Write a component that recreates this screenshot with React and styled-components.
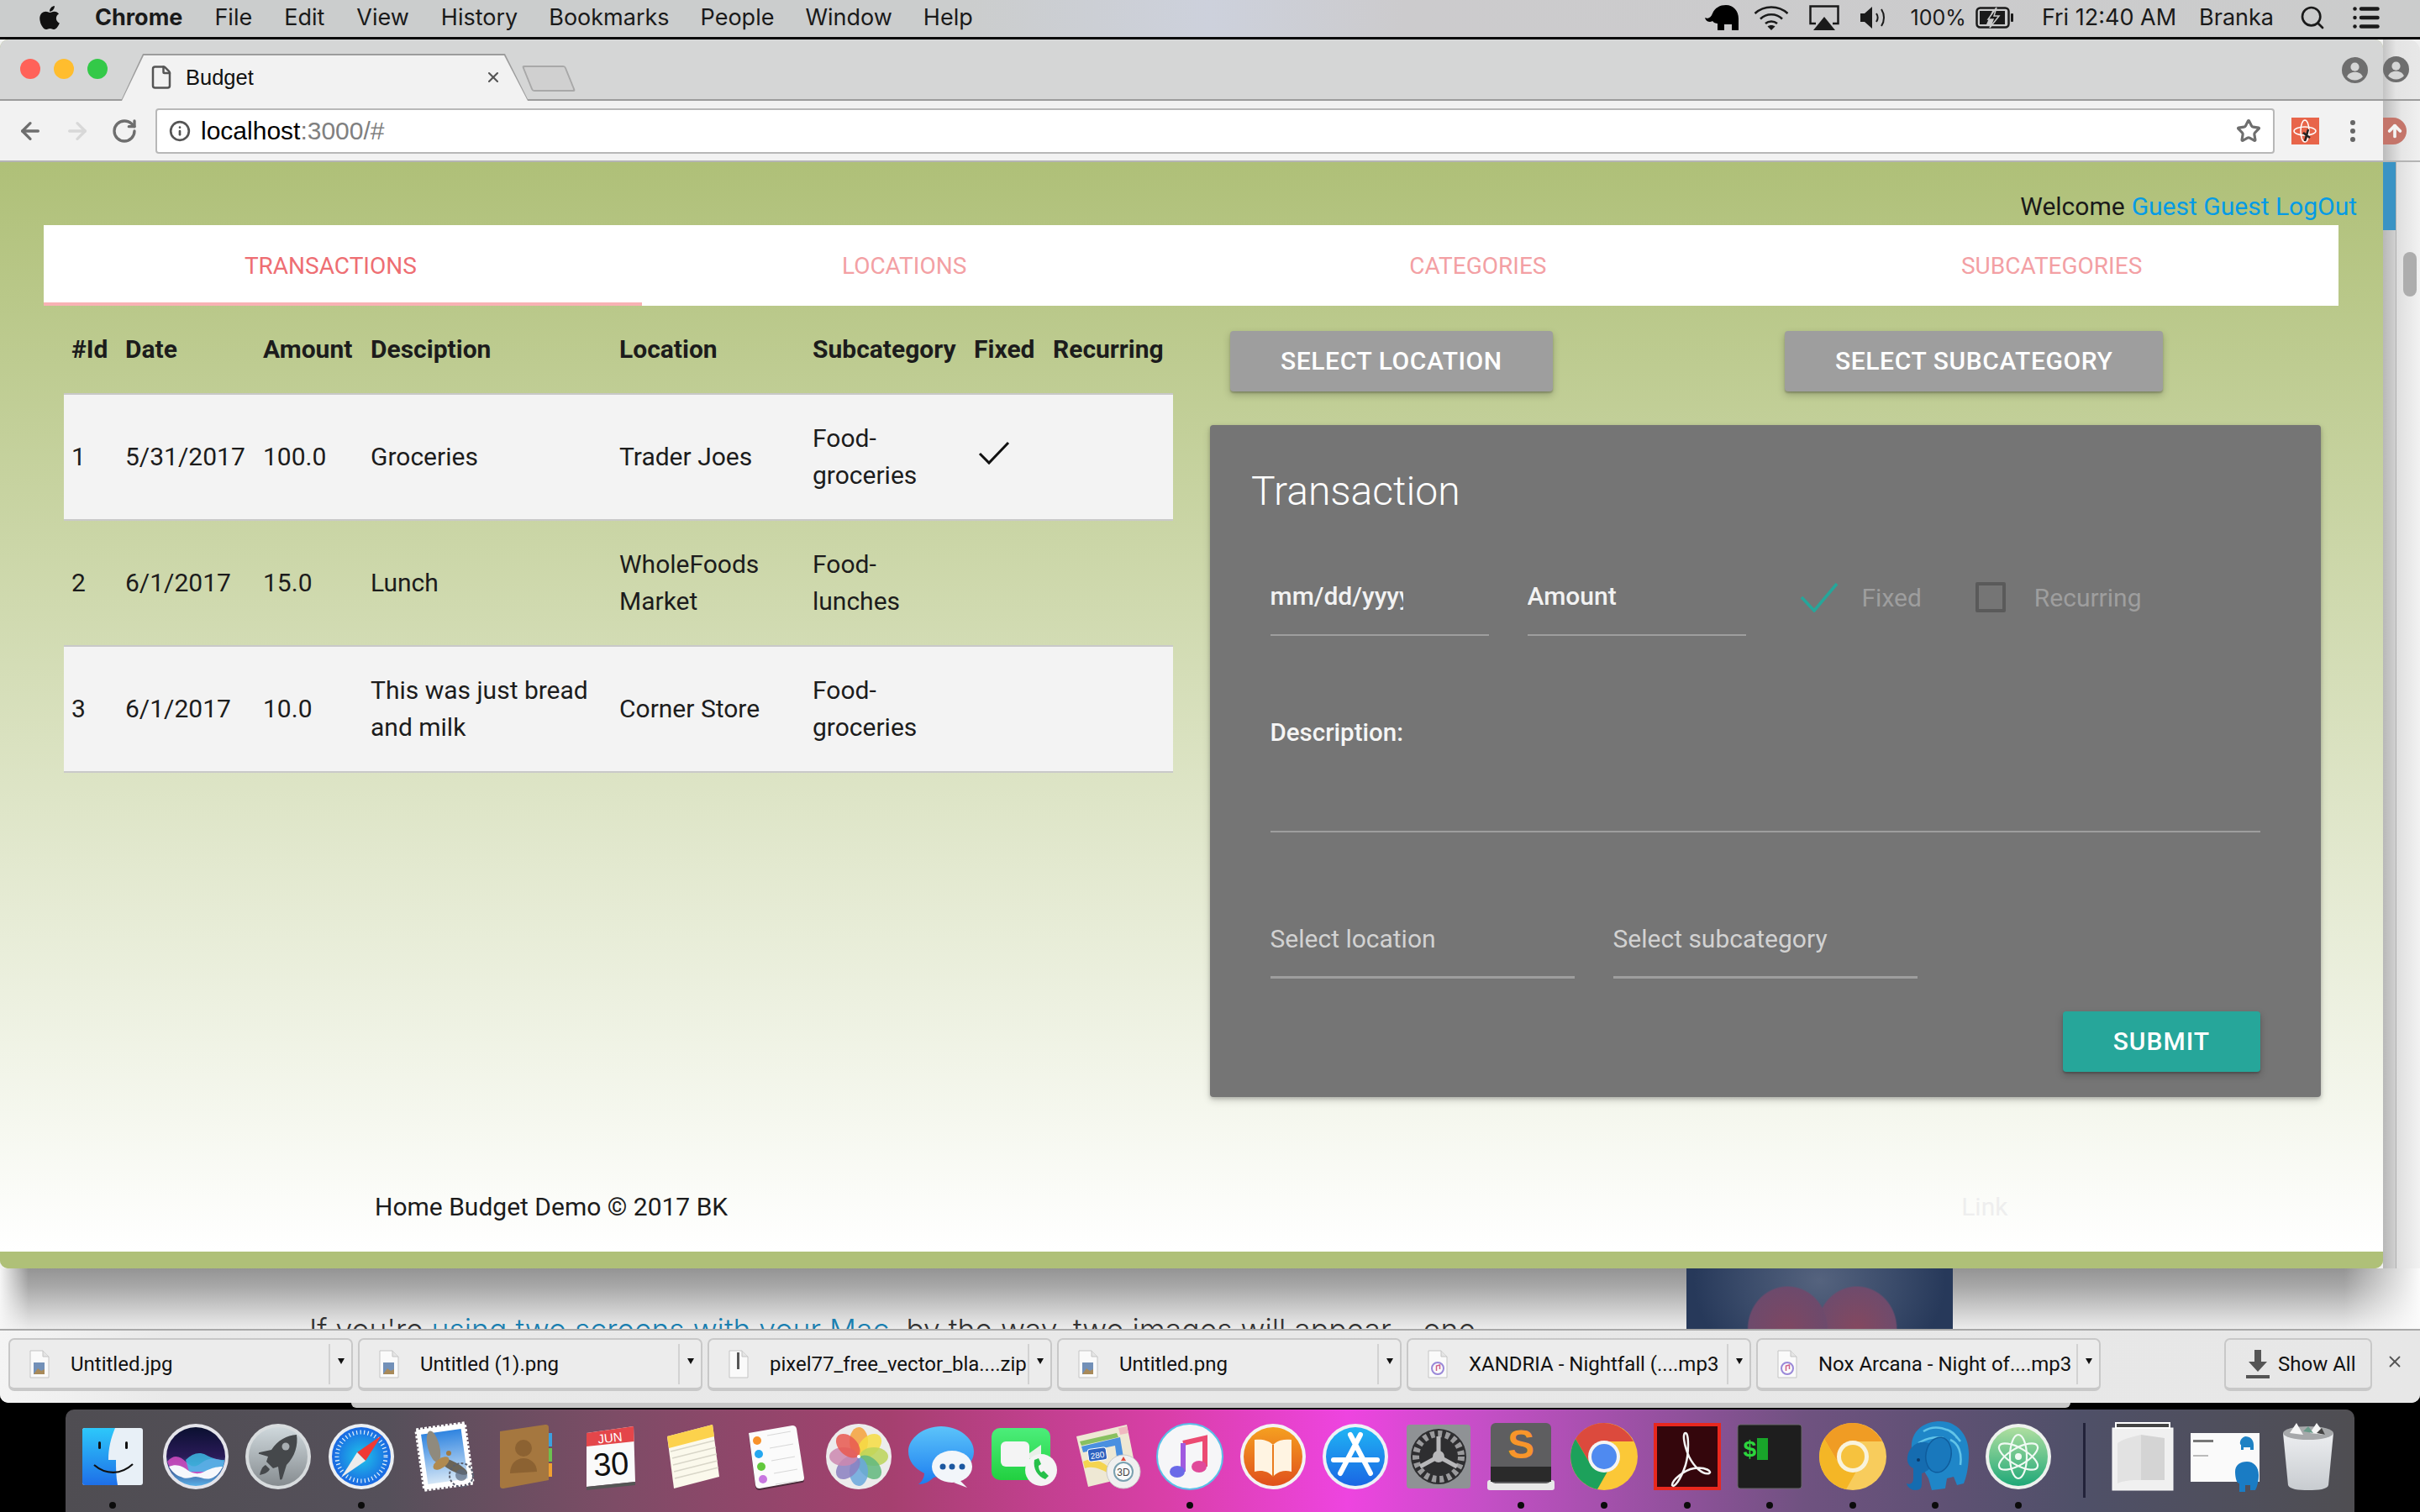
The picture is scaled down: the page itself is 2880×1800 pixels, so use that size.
import React from 'react';
import styled, { createGlobalStyle } from 'styled-components';
import { FaApple } from 'react-icons/fa';
import { Search, List, Star, Info, ArrowLeft, ArrowRight, RotateCw, File, X, ArrowUp } from 'lucide-react';

const Global = createGlobalStyle`
  html, body { margin: 0; padding: 0; background: #000; }
  * { box-sizing: border-box; }
`;

const Screen = styled.div`
  width: 2880px;
  height: 1800px;
  overflow: hidden;
  display: flex;
  flex-direction: column;
  font-family: Roboto, sans-serif;
  background: #000;
`;

/* mac menu bar */
const MenuBar = styled.div`
  height: 47px;
  flex: none;
  display: flex;
  align-items: center;
  padding: 0 46px 3px 43px;
  border-bottom: 3px solid #0a0a0a;
  background: linear-gradient(90deg, #cbcdcd 0%, #cbcdcd 40%, #cdd1dc 50%, #cccbcd 58%, #cbcccc 100%);
  font-family: Inter, sans-serif;
  font-size: 27px;
  color: #1a1a1a;
`;

const MenuLink = styled.span`
  margin-left: ${p => p.$ml}px;
  font-size: ${p => p.$size || 27}px;
  font-weight: ${p => (p.$bold ? 700 : 400)};
  white-space: nowrap;
`;

const MenuIcon = styled.span`
  display: flex;
  align-items: center;
  margin-left: ${p => p.$ml}px;
`;

const Spacer = styled.div`
  flex: 1;
`;

/* the window behind, it holds the download bar */
const BackWindow = styled.div`
  height: 1623px;
  flex: none;
  display: flex;
  flex-direction: column;
  background: #f0f0f0;
  border-radius: 0 0 10px 10px;
  overflow: hidden;
`;

const TopRow = styled.div`
  height: 1463px;
  flex: none;
  display: flex;
`;

const FrontWindow = styled.div`
  width: 2836px;
  flex: none;
  display: flex;
  flex-direction: column;
  background: #afc078;
  border-radius: 10px;
  overflow: hidden;
`;

const TabStrip = styled.div`
  height: 73px;
  flex: none;
  display: flex;
  align-items: flex-end;
  background: #d5d6d6;
  border-bottom: 2px solid #9c9c9c;
`;

const Lights = styled.div`
  width: 144px;
  height: 100%;
  flex: none;
  display: flex;
  align-items: center;
  gap: 16px;
  padding: 0 0 1px 24px;
`;

const Light = styled.span`
  width: 24px;
  height: 24px;
  border-radius: 50%;
  background: ${p => p.$color};
`;

const Tab = styled.div`
  position: relative;
  width: 485px;
  height: 56px;
  margin-bottom: -2px;
  flex: none;
  display: flex;
  align-items: center;
  padding-left: 33px;
  font-size: 25.5px;
  font-family: "Liberation Sans", sans-serif;
  color: #111;
  background: #9c9c9c;
  clip-path: polygon(26px 0, calc(100% - 28px) 0, 100% 100%, 0 100%);
  &::before {
    content: '';
    position: absolute;
    inset: 2px 0 0 0;
    background: #f2f2f2;
    clip-path: polygon(27px 0, calc(100% - 29px) 0, calc(100% - 1px) 100%, 1px 100%);
  }
  & > * { position: relative; }
`;

const TabTitle = styled.span`
  margin-left: 14px;
  flex: 1;
`;

const TabClose = styled.span`
  display: flex;
  margin-right: 32px;
`;

const NewTab = styled.div`
  width: 52px;
  height: 31px;
  margin: 0 0 9px -2px;
  flex: none;
  transform: skewX(22deg);
  background: #d0d0d0;
  border: 2px solid #a8a8a8;
  border-radius: 3px;
`;

const ProfileSpot = styled.div`
  margin: 0 18px 19px auto;
  display: flex;
`;

const Toolbar = styled.div`
  height: 73px;
  flex: none;
  display: flex;
  align-items: center;
  background: #f2f2f2;
  border-bottom: 2px solid #b4b4b4;
  padding-left: 20px;
`;

const NavIcon = styled.span`
  display: flex;
  margin-right: ${p => p.$mr}px;
  color: ${p => p.$color || '#6e6e6e'};
`;

const Omnibox = styled.div`
  width: 2522px;
  height: 54px;
  flex: none;
  display: flex;
  align-items: center;
  padding: 0 14px;
  background: #fff;
  border: 2px solid #b8b8b8;
  border-radius: 4px;
  font-family: "Liberation Sans", sans-serif;
  font-size: 30px;
  color: #000;
`;

const Url = styled.span`
  margin-left: 12px;
  flex: 1;
`;

const UrlRest = styled.span`
  color: #808080;
`;

const Extension = styled.div`
  width: 33px;
  height: 32px;
  margin-left: 20px;
  flex: none;
  display: flex;
  background: #e8654a;
`;

const Kebab = styled.div`
  margin-left: 37px;
  display: flex;
  flex-direction: column;
  gap: 4px;
  & > span {
    width: 6px;
    height: 6px;
    border-radius: 50%;
    background: #666;
  }
`;

/* the page in the browser */
const Content = styled.div`
  height: 1297px;
  flex: none;
  display: flex;
  flex-direction: column;
  background: linear-gradient(180deg, #afc078 0%, #ffffff 100%);
`;

const WelcomeRow = styled.div`
  height: 75px;
  flex: none;
  display: flex;
  justify-content: flex-end;
  align-items: flex-end;
  padding-right: 31px;
  font-size: 30px;
  line-height: 44px;
  color: #1a1a1a;
`;

const BlueLink = styled.a`
  color: #039be5;
  margin-left: 8px;
`;

const Tabs = styled.div`
  height: 96px;
  margin: 0 53px 0 52px;
  flex: none;
  display: grid;
  grid-template-columns: repeat(4, 1fr);
  background: #fff;
`;

const TabLink = styled.div`
  position: relative;
  display: flex;
  align-items: center;
  justify-content: center;
  padding-top: 1px;
  font-size: 28px;
  color: ${p => (p.$active ? '#ee6e73' : '#f3a0a4')};
`;

/* the indicator runs a bit wider than its tab, as in the original */
const TabIndicator = styled.span`
  position: absolute;
  left: 0;
  bottom: 0;
  width: 712px;
  height: 4px;
  background: #f8b2b4;
`;

const Main = styled.div`
  display: flex;
  padding-left: 76px;
  gap: 44px;
`;

const Table = styled.table`
  width: 1320px;
  height: 556px;
  flex: none;
  table-layout: fixed;
  border-collapse: collapse;
  font-size: 30px;
  line-height: 44px;
  color: #1c1c1c;
`;

const Th = styled.th`
  padding: 30px 0 30px 9px;
  text-align: left;
  font-weight: 700;
  white-space: nowrap;
  border-bottom: 2px solid #c8c8c8;
`;

const Row = styled.tr`
  background: ${p => (p.$odd ? '#f3f3f3' : 'transparent')};
`;

const Td = styled.td`
  padding: 30px 9px;
  vertical-align: middle;
  border-bottom: 2px solid #c9c9c9;
`;

const FixedMark = styled.svg`
  display: block;
  margin: -8px 0 0 5px;
`;

const RightCol = styled.div`
  width: 1322px;
  flex: none;
  padding-top: 30px;
`;

const ButtonRow = styled.div`
  display: grid;
  grid-template-columns: 660px 660px;
  padding-left: 24px;
`;

const RaisedButton = styled.button`
  height: 72px;
  padding: 0 60px 2px;
  justify-self: start;
  border: none;
  border-radius: 4px;
  background: ${p => p.$color};
  color: #fff;
  font-family: Roboto, sans-serif;
  font-size: 30px;
  font-weight: 500;
  letter-spacing: ${p => p.$spacing || 0.6}px;
  box-shadow: 0 4px 10px rgba(0, 0, 0, .22), 0 2px 2px rgba(0, 0, 0, .2);
`;

const Card = styled.div`
  margin-top: 40px;
  height: 800px;
  padding: 47px 72px 30px 49px;
  background: #757575;
  border-radius: 4px;
  box-shadow: 0 4px 10px rgba(0, 0, 0, .16), 0 2px 4px rgba(0, 0, 0, .18);
`;

const CardTitle = styled.div`
  font-size: 48px;
  font-weight: 300;
  line-height: 64px;
  color: #fff;
`;

const Form = styled.div`
  padding-left: 22.5px;
  display: flex;
  flex-direction: column;
`;

const InputRow = styled.div`
  display: flex;
  align-items: flex-start;
  margin-top: 50px;
`;

const Field = styled.div`
  width: ${p => p.$w}px;
  height: 90px;
  margin-right: ${p => p.$mr || 0}px;
  flex: none;
  display: flex;
  align-items: center;
  padding-bottom: 4px;
  border-bottom: 2px solid #9e9e9e;
`;

const TextInput = styled.input`
  width: ${p => p.$w || 240}px;
  padding: 0;
  border: none;
  outline: none;
  background: transparent;
  font-family: Roboto, sans-serif;
  font-size: 30px;
  font-weight: 500;
  color: #f2f2f2;
  &::placeholder { color: #f2f2f2; opacity: 1; }
`;

const CheckItem = styled.div`
  height: 90px;
  display: flex;
  align-items: center;
  padding-bottom: 2px;
  margin-right: ${p => p.$mr || 0}px;
  font-size: 30px;
  color: #9e9e9e;
`;

const CheckLabel = styled.span`
  margin-left: ${p => p.$ml}px;
`;

const BoxMark = styled.span`
  width: 36px;
  height: 36px;
  border: 4px solid #5a5a5a;
  border-radius: 2px;
`;

const DescField = styled.div`
  height: 141px;
  margin-top: 93px;
  font-size: 29.5px;
  font-weight: 500;
  line-height: 44px;
  color: #f5f5f5;
  border-bottom: 2px solid #9e9e9e;
`;

const SelectRow = styled.div`
  display: flex;
  gap: 46px;
  margin-top: 82px;
`;

const SelectField = styled.div`
  width: 362px;
  height: 92px;
  display: flex;
  align-items: center;
  font-size: 30px;
  color: #d2d2d2;
  border-bottom: 3px solid #9e9e9e;
`;

const SubmitRow = styled.div`
  display: flex;
  justify-content: flex-end;
  margin-top: 39px;
`;

const Footer = styled.div`
  margin-top: auto;
  height: 75px;
  flex: none;
  display: flex;
  padding-left: 446px;
  font-size: 30px;
  line-height: 44px;
  color: #1c1c1c;
`;

const FooterLink = styled.span`
  margin-left: 1468px;
  color: #eeeeee;
`;

const GreenEdge = styled.div`
  flex: 1;
  background: #afc078;
`;

/* what can be seen of the window behind on the right */
const SideStrip = styled.div`
  flex: 1;
  display: flex;
  flex-direction: column;
`;

const SideTabs = styled.div`
  height: 73px;
  flex: none;
  display: flex;
  align-items: center;
  padding-bottom: 1px;
  background: linear-gradient(90deg, #c4c4c4, #e4e4e4 35%, #e8e8e8);
  border-bottom: 2px solid #9c9c9c;
  border-radius: 0 14px 0 0;
`;

const SideTools = styled.div`
  height: 73px;
  flex: none;
  display: flex;
  align-items: center;
  background: linear-gradient(90deg, #bcbcbc, #e6e6e6 50%, #f0f0f0);
  border-bottom: 2px solid #b4b4b4;
`;

const UploadBadge = styled.div`
  width: 28px;
  height: 32px;
  display: flex;
  align-items: center;
  justify-content: center;
  border-radius: 0 16px 16px 0;
  background: #c4756a;
  color: #f4f4f4;
`;

const SideBody = styled.div`
  flex: 1;
  display: flex;
`;

const SideRail = styled.div`
  width: 16px;
  flex: none;
  background: linear-gradient(90deg, #b8b8b8, #d0d0d0);
  border-right: 1px solid #b0b0b0;
`;

const SideBlue = styled.div`
  height: 81px;
  background: #3a93c4;
`;

const SideTrack = styled.div`
  flex: 1;
  padding: 107px 4px 0 8px;
  background: linear-gradient(90deg, #dedede, #f2f2f2);
`;

const SideThumb = styled.div`
  height: 53px;
  border-radius: 8px;
  background: #adadad;
`;

const ArticlePeek = styled.div`
  height: 72px;
  flex: none;
  display: flex;
  overflow: hidden;
  background:
    linear-gradient(90deg, #f6f6f6 0, rgba(246, 246, 246, 0) 34px),
    linear-gradient(270deg, #fbfbfb 0, rgba(251, 251, 251, 0) 90px),
    linear-gradient(180deg, #949494 0, #a8a8a8 30%, #cfcfcf 70%, #ececec 100%);
`;

const ArticleText = styled.div`
  width: 2007px;
  flex: none;
  padding: 52px 0 0 368px;
  font-family: Inter, sans-serif;
  font-size: 35.5px;
  font-weight: 300;
  line-height: 44px;
  color: #333;
  white-space: nowrap;
`;

const ArticleLink = styled.span`
  color: #1a7fb0;
`;

const ArticleImage = styled.div`
  width: 317px;
  flex: none;
  background:
    radial-gradient(ellipse 62px 66px at 38% 100%, #7e4762 0, #6d4a6c 75%, transparent 78%),
    radial-gradient(ellipse 62px 66px at 64% 100%, #84485f 0, #6f4b6c 75%, transparent 78%),
    radial-gradient(ellipse 150px 120px at 50% 20%, #55637e 0, #3a4b6a 60%, transparent 100%),
    #27395a;
`;

const DownloadBar = styled.div`
  flex: 1;
  display: flex;
  align-items: flex-start;
  gap: 6px;
  padding: 9px 0 0 10px;
  border-top: 2px solid #a8a8a8;
  background: linear-gradient(90deg, #f4f4f4 0, #e9e9e9 200px, #e7e7e7 100%);
`;

const DownloadItem = styled.div`
  width: 410px;
  height: 63px;
  flex: none;
  display: flex;
  align-items: center;
  padding-left: 22px;
  border: 2px solid #c8c8c8;
  border-bottom-width: 4px;
  border-radius: 7px;
  background: #ececec;
  font-family: Roboto, sans-serif;
  font-size: 24px;
  color: #111;
`;

const DownloadName = styled.span`
  margin-left: 24px;
  flex: 1;
  white-space: nowrap;
`;

const DownloadCaret = styled.span`
  width: 27px;
  height: 48px;
  flex: none;
  display: flex;
  align-items: center;
  justify-content: center;
  padding-bottom: 6px;
  border-left: 2px solid #d2d2d2;
  &::before {
    content: '';
    border-left: 4px solid transparent;
    border-right: 4px solid transparent;
    border-top: 7px solid #111;
  }
`;

const ShowAll = styled.div`
  width: 176px;
  height: 63px;
  margin-left: 141px;
  flex: none;
  display: flex;
  align-items: center;
  gap: 10px;
  padding-left: 24px;
  border: 2px solid #c8c8c8;
  border-bottom-width: 4px;
  border-radius: 7px;
  font-family: Roboto, sans-serif;
  font-size: 24px;
  white-space: nowrap;
  color: #111;
`;

const BarClose = styled.span`
  margin: 17px 0 0 10px;
  display: flex;
  color: #555;
`;

/* desktop and dock */
const Desktop = styled.div`
  flex: 1;
  min-height: 0;
  background: #000;
`;

const BehindEdge = styled.div`
  width: 2046px;
  height: 6px;
  margin-left: 418px;
  background: #c8c8c8;
  border-radius: 0 0 8px 8px;
`;

const Dock = styled.div`
  width: 2724px;
  height: 122px;
  margin: 2px 0 0 78px;
  display: flex;
  padding: 14px 0 0 7px;
  border-radius: 10px 10px 0 0;
  background: linear-gradient(90deg, #4f4d52 0%, #55505a 14%, #7d4c66 24%, #a5406f 36%, #d93fa8 48%, #ee44e0 56%, #c44fc6 62%, #6f5280 76%, #4f5068 88%, #4f4e52 100%);
`;

const DockSlot = styled.div`
  width: 98.6px;
  flex: none;
  display: flex;
  flex-direction: column;
  align-items: center;
`;

const DockGlyph = styled.svg`
  width: 84px;
  height: 84px;
  flex: none;
`;

const DockDot = styled.span`
  width: 8px;
  height: 8px;
  margin-top: 12px;
  flex: none;
  border-radius: 50%;
  background: ${p => (p.$on ? '#0b0b0b' : 'transparent')};
`;

const DockDivider = styled.span`
  width: 3px;
  height: 89px;
  margin: 2px 18px 0 28px;
  flex: none;
  background: #23233a;
`;

const Profile = ({ size = 31 }) => (
  <svg width={size} height={size} viewBox="0 0 28 28">
    <circle cx="14" cy="14" r="14" fill="#6e6e6e" />
    <circle cx="14" cy="10.500" r="4.600" fill="#d5d6d6" />
    <path d="M5.500 21c1.500-3.600 5-5 8.500-5s7 1.400 8.500 5c-2 2.400-5 3.800-8.500 3.800S7.500 23.400 5.500 21z" fill="#d5d6d6" />
  </svg>
);

const DocIcon = ({ kind }) => (
  <svg width="26" height="34" viewBox="0 0 26 34" style={{ flex: 'none' }}>
    <path d="M2 1h15l7 7v25H2z" fill="#fafafa" stroke="#c4c4c4" />
    <path d="M17 1v7h7" fill="#e4e4e4" stroke="#c4c4c4" />
    {kind === 'img' && <rect x="6" y="15" width="13" height="14" fill="#7290b8" />}
    {kind === 'img' && <path d="M6 29l5-7 4 3 4-2v6z" fill="#a88a5a" />}
    {kind === 'zip' && <rect x="11" y="3" width="3" height="20" fill="#555" />}
    {kind === 'mp3' && <circle cx="13" cy="22" r="7" fill="none" stroke="#9a88d8" strokeWidth="2" />}
    {kind === 'mp3' && <path d="M11.500 25v-6l4-1v5" fill="none" stroke="#d0608a" strokeWidth="1.500" />}
  </svg>
);

const Elephant = () => (
  <svg width="42" height="32" viewBox="0 0 42 32">
    <path d="M1 16c4 2 7 0 9-5C13 4 19 1 26 1c9 0 15 7 15 16v14h-8v-7h-9v7h-8v-8c-2 0-5-1-6-3-3 2-8 1-9-4z" fill="#000" />
  </svg>
);

const Wifi = () => (
  <svg width="42" height="30" viewBox="0 0 42 30" fill="none" stroke="#1a1a1a" strokeWidth="2.500">
    <path d="M1.500 10c11-10 28-10 39 0" />
    <path d="M8 16.500c7-7 19-7 26 0" />
    <path d="M14 22c4-3.500 10-3.500 14 0" />
    <path d="M21 30l-4.500-4.500c2.500-2 6.500-2 9 0z" fill="#1a1a1a" stroke="none" />
  </svg>
);

const AirPlayMark = () => (
  <svg width="36" height="30" viewBox="0 0 36 30">
    <path d="M8 22H1.500V1.500h33V22H28" fill="none" stroke="#1a1a1a" strokeWidth="2.500" />
    <path d="M18 14l13 16H5z" fill="#1a1a1a" />
  </svg>
);

const Speaker = () => (
  <svg width="34" height="28" viewBox="0 0 34 28" fill="none" stroke="#1a1a1a" strokeWidth="2">
    <path d="M1 9h5l9-8v26l-9-8H1z" fill="#1a1a1a" stroke="none" />
    <path d="M20 9c2 3 2 7 0 10" />
    <path d="M26 4c4 6 4 14 0 20" />
  </svg>
);

const Battery = () => (
  <svg width="46" height="26" viewBox="0 0 46 26">
    <rect x="1.500" y="1.500" width="38" height="23" rx="4" fill="none" stroke="#1a1a1a" strokeWidth="2.500" />
    <rect x="42" y="8" width="3" height="10" rx="1" fill="#1a1a1a" />
    <path d="M5 5h15L13 21H5zM22 5h13v16H20z" fill="#1a1a1a" />
    <path d="M25 1l-10 14h6l-4 10 11-14h-6z" fill="#1a1a1a" stroke="#cbcccc" strokeWidth="1.500" />
  </svg>
);

const Glyph = ({ children }) => <DockGlyph viewBox="0 0 84 84">{children}</DockGlyph>;

const Fade = ({ id, from, to, mid }) => (
  <defs>
    <linearGradient id={id} x1="0" y1="0" x2="0" y2="1">
      <stop offset="0" stopColor={from} />
      {mid && <stop offset=".5" stopColor={mid} />}
      <stop offset="1" stopColor={to} />
    </linearGradient>
  </defs>
);

const dockIcons = [
  { key: 'finder', on: true, art: (
    <>
      <Fade id="finderBlue" from="#2dc8fa" to="#1e6fe8" />
      <rect x="6" y="8" width="72" height="68" rx="3" fill="#e8f0f7" />
      <path d="M9 8h36c-5 12-8 24-8 38h9c0 10 0 20 2 30H9c-2 0-3-1-3-3V11c0-2 1-3 3-3z" fill="url(#finderBlue)" />
      <rect x="25" y="24" width="3" height="9" rx="1.500" fill="#111" />
      <rect x="57" y="24" width="3" height="9" rx="1.500" fill="#111" />
      <path d="M20 52c14 12 32 12 46-1" fill="none" stroke="#111" strokeWidth="2.200" />
    </>
  ) },
  { key: 'siri', art: (
    <>
      <Fade id="siriBack" from="#0a1030" mid="#2a1a58" to="#5ab0e8" />
      <circle cx="42" cy="42" r="39" fill="#e4e4ea" />
      <circle cx="42" cy="42" r="35" fill="url(#siriBack)" />
      <path d="M8 48c8-10 16-6 22 0s10 8 18 2 14-8 28-2c-2 8-6 12-10 14H18c-4-3-8-8-10-14z" fill="#e04fc8" opacity=".8" />
      <path d="M30 46c8-8 16-10 24-6s14 6 22 6c0 6-2 10-6 14H34z" fill="#3fc4ee" opacity=".8" />
      <path d="M10 54c10-4 16 0 22 4s12 6 20 2 14-6 22-6c-4 8-8 12-14 14-8 2-12-2-18-2s-10 4-18 0c-6-2-10-6-14-12z" fill="#f6f8fc" />
    </>
  ) },
  { key: 'launchpad', art: (
    <>
      <Fade id="padBack" from="#cfd8dc" to="#868c90" />
      <circle cx="42" cy="42" r="39" fill="#d8dcde" />
      <circle cx="42" cy="42" r="35" fill="url(#padBack)" />
      <path d="M64 16c-12 1-22 6-30 18l-14 3c-1 0-2 2 0 2l10 3-2 6 8 8 6-2 2 14c0 2 2 2 3 0l5-16C62 42 66 28 64 16z" fill="#45484b" />
      <circle cx="51" cy="30" r="4.500" fill="#a8aeb2" />
      <path d="M27 52c-4 2-6 7-7 12 5-1 10-3 12-7z" fill="#45484b" />
    </>
  ) },
  { key: 'safari', on: true, art: (
    <>
      <defs>
        <radialGradient id="safariBack">
          <stop offset="0" stopColor="#1fc4ea" />
          <stop offset="1" stopColor="#1a68e2" />
        </radialGradient>
      </defs>
      <circle cx="42" cy="42" r="39" fill="#eceff2" />
      <circle cx="42" cy="42" r="35" fill="url(#safariBack)" />
      <circle cx="42" cy="42" r="29" fill="none" stroke="#e4f0fb" strokeWidth="5" strokeDasharray="1.200 3.300" />
      <path d="M66 17L47 47 37 37z" fill="#f03a35" />
      <path d="M18 67l19-30 10 10z" fill="#ececec" />
    </>
  ) },
  { key: 'mail', art: (
    <>
      <Fade id="mailSky" from="#2f84e0" to="#d4e6f6" />
      <rect x="13" y="6" width="58" height="72" fill="#fff" stroke="#fff" strokeWidth="4" strokeDasharray="3 2" transform="rotate(-8 42 42)" />
      <rect x="18" y="12" width="48" height="60" fill="url(#mailSky)" transform="rotate(-8 42 42)" />
      <ellipse cx="29" cy="30" rx="7" ry="19" fill="#8f8a7e" transform="rotate(-14 29 30)" />
      <ellipse cx="53" cy="54" rx="18" ry="5.500" fill="#6a6458" transform="rotate(28 53 54)" />
      <ellipse cx="38" cy="50" rx="11" ry="5.500" fill="#b08a50" transform="rotate(-35 38 50)" />
      <circle cx="47" cy="38" r="3" fill="#a07a44" />
      <circle cx="62" cy="64" r="14" fill="none" stroke="#5a6070" strokeWidth="2" strokeDasharray="3 2" />
      <circle cx="62" cy="64" r="7" fill="#5a6a80" opacity=".7" />
    </>
  ) },
  { key: 'contacts', art: (
    <>
      <rect x="66" y="14" width="6" height="16" fill="#3ba0e0" />
      <rect x="66" y="32" width="6" height="16" fill="#6cc050" />
      <rect x="66" y="50" width="6" height="16" fill="#f0a030" />
      <path d="M10 12l54-8c3 0 4 1 4 4v62L14 80c-3 0-4-1-4-4z" fill="#a5773f" />
      <circle cx="38" cy="32" r="10" fill="#8c6232" />
      <path d="M22 62c0-12 8-18 16-18s16 6 16 16z" fill="#8c6232" />
    </>
  ) },
  { key: 'calendar', art: (
    <>
      <path d="M14 14l56-8 2 66-58 6z" fill="#fafafa" />
      <path d="M14 14l56-8 .6 18-56.600 6z" fill="#e4464a" />
      <text x="42" y="25" fontFamily="Liberation Sans, sans-serif" fontSize="15" fill="#fff" textAnchor="middle" transform="rotate(-6 42 20)">JUN</text>
      <text x="43" y="64" fontFamily="Liberation Sans, sans-serif" fontSize="38" fill="#111" textAnchor="middle" transform="rotate(-4 42 50)">30</text>
      <path d="M14 78l58-6v4l-58 6z" fill="#555" />
    </>
  ) },
  { key: 'notes', art: (
    <>
      <path d="M12 18l54-14 8 62-54 14z" fill="#fbf9ec" />
      <path d="M12 18l54-14 2 14-54 14z" fill="#fcd24c" />
      <path d="M16 36l52-13M18 44l52-13M19 52l52-13M20 60l52-13M21 68l52-13" stroke="#d8d6c8" strokeWidth="1.500" />
    </>
  ) },
  { key: 'reminders', art: (
    <>
      <path d="M10 16l52-9c3 0 4 1 5 4l9 58c0 3-1 4-3 4l-50 9c-3 0-4-1-5-4z" fill="#1a1a1a" opacity=".6" />
      <path d="M10 14l52-9c3 0 4 1 5 4l9 58c0 3-1 4-3 4l-50 9c-3 0-4-1-5-4z" fill="#fbfbfb" />
      <circle cx="20" cy="23" r="5" fill="#f8922a" />
      <circle cx="22" cy="39" r="5" fill="#25a8f0" />
      <circle cx="25" cy="54" r="5" fill="#62c83c" />
      <circle cx="27" cy="69" r="5" fill="#c878e0" />
      <path d="M32 17l28-5M35 32l28-5M37 47l28-5M40 62l28-5M42 75l26-4" stroke="#d8d8d8" strokeWidth="1.200" />
    </>
  ) },
  { key: 'photos', art: (
    <>
      <circle cx="42" cy="42" r="39" fill="#ececec" />
      {['#f5a23c', '#f6dc44', '#bcd45a', '#62b87e', '#6aa8dc', '#8a80c0', '#cc88b0', '#e85a50'].map((c, i) => (
        <ellipse key={c} cx="42" cy="24" rx="11" ry="17" fill={c} opacity=".86" transform={`rotate(${i * 45} 42 42)`} />
      ))}
      <circle cx="42" cy="42" r="2" fill="#fff" />
    </>
  ) },
  { key: 'messages', art: (
    <>
      <Fade id="msgBlue" from="#5cc4fa" to="#1c7df0" />
      <path d="M42 6c21 0 39 14 39 30S63 66 42 66c-3 0-6 0-9 1-5 5-11 8-18 8 4-3 7-8 7-13C10 56 3 47 3 36 3 20 21 6 42 6z" fill="url(#msgBlue)" />
      <ellipse cx="55" cy="54" rx="24" ry="19" fill="#f2f6fa" />
      <path d="M64 70l9 9-16-6z" fill="#f2f6fa" />
      <circle cx="44" cy="54" r="3.500" fill="#1c58a0" />
      <circle cx="55" cy="54" r="3.500" fill="#1c58a0" />
      <circle cx="67" cy="54" r="3.500" fill="#1c58a0" />
    </>
  ) },
  { key: 'facetime', art: (
    <>
      <Fade id="ftGreen" from="#4cee7a" to="#22d040" />
      <rect x="3" y="8" width="70" height="62" rx="10" fill="url(#ftGreen)" />
      <rect x="14" y="24" width="34" height="30" rx="6" fill="#f4f4f4" />
      <path d="M48 38l14-10v26l-14-10z" fill="#e8f0e8" />
      <circle cx="62" cy="58" r="19" fill="#f4f4f4" />
      <path d="M54 46c-2 10 4 20 13 23l4-4-6-6-3 2c-2-2-3-5-3-8l3-2-3-7z" fill="#26c04a" />
    </>
  ) },
  { key: 'maps', art: (
    <>
      <path d="M6 18L66 4l12 60-58 14z" fill="#eee8d4" />
      <path d="M10 24l44-10 2 5-44 10z" fill="#88c060" />
      <path d="M12 30l46-11 6 36-8 2-4-28-38 8z" fill="#4a90e0" />
      <path d="M56 8l10-2 2 8-10 2z" fill="#f0b8c0" />
      <path d="M14 48c12-6 22 0 30 6l4 10c-10-6-22-12-32-8z" fill="#f4d450" />
      <rect x="20" y="32" width="22" height="15" rx="3" fill="#2e62c0" stroke="#fff" transform="rotate(-8 31 40)" />
      <text x="31" y="44" fontFamily="Liberation Sans, sans-serif" fontSize="10" fill="#fff" textAnchor="middle" transform="rotate(-8 31 40)">280</text>
      <circle cx="62" cy="60" r="20" fill="#f0f0f0" stroke="#c8c8c8" />
      <circle cx="62" cy="60" r="11" fill="#fafafa" stroke="#7aa0b0" strokeWidth="2" />
      <path d="M62 42l3 5h-6z" fill="#e04a3a" />
      <text x="62" y="65" fontFamily="Liberation Sans, sans-serif" fontSize="12" fill="#444" textAnchor="middle">3D</text>
    </>
  ) },
  { key: 'itunes', on: true, art: (
    <>
      <circle cx="42" cy="42" r="39" fill="#f6f6f8" stroke="#59c0e8" strokeWidth="2" />
      <path d="M34 26l26-6v34" fill="none" stroke="#ec4a72" strokeWidth="6" />
      <path d="M34 26v34" fill="none" stroke="#a05ae0" strokeWidth="6" />
      <ellipse cx="27" cy="60" rx="9" ry="7" fill="#6a6ae8" />
      <ellipse cx="53" cy="54" rx="9" ry="7" fill="#e04a9a" />
    </>
  ) },
  { key: 'books', art: (
    <>
      <Fade id="bookOrange" from="#f5a020" to="#e0501c" />
      <circle cx="42" cy="42" r="39" fill="#f4f4f4" />
      <circle cx="42" cy="42" r="35" fill="url(#bookOrange)" />
      <path d="M42 28c-6-6-14-7-22-6v38c8-2 16-1 22 6 6-7 14-8 22-6V22c-8-1-16 0-22 6z" fill="#fff4e2" />
      <path d="M42 28v38" stroke="#ea7c1e" strokeWidth="2" />
    </>
  ) },
  { key: 'appstore', art: (
    <>
      <Fade id="storeBlue" from="#20b4f4" to="#1a66e4" />
      <circle cx="42" cy="42" r="39" fill="#eef2f6" />
      <circle cx="42" cy="42" r="35" fill="url(#storeBlue)" />
      <path d="M48 16L24 62M36 16l24 46" stroke="#fff" strokeWidth="6" strokeLinecap="round" />
      <path d="M16 46h52" stroke="#fff" strokeWidth="6" strokeLinecap="round" />
    </>
  ) },
  { key: 'prefs', art: (
    <>
      <rect x="4" y="4" width="76" height="76" rx="4" fill="#8f9295" />
      <circle cx="42" cy="42" r="33" fill="#2e2e30" />
      <circle cx="42" cy="42" r="27" fill="none" stroke="#9a9a9c" strokeWidth="8" strokeDasharray="5 4" />
      <circle cx="42" cy="42" r="7" fill="#b8b8ba" />
      <path d="M42 42V18M42 42l22 12M42 42L20 54" stroke="#b8b8ba" strokeWidth="5" />
    </>
  ) },
  { key: 'sublime', on: true, art: (
    <>
      <rect x="2" y="70" width="80" height="12" rx="3" fill="#e8e8e8" />
      <rect x="6" y="2" width="72" height="72" rx="6" fill="#5e5e60" />
      <rect x="6" y="54" width="72" height="18" fill="#2a2a2a" />
      <text x="42" y="44" fontFamily="Liberation Sans, sans-serif" fontWeight="700" fontSize="48" fill="#f7952a" textAnchor="middle">S</text>
    </>
  ) },
  { key: 'chrome', on: true, art: (
    <>
      <circle cx="42" cy="42" r="40" fill="#fbc837" />
      <path d="M42 2a40 40 0 0 0-34 19l17 29-1-8a18 18 0 0 1 18-18h35A40 40 0 0 0 42 2z" fill="#dc4a3d" />
      <path d="M8 21a40 40 0 0 0 26 60l17-30-9 9a18 18 0 0 1-17-10z" fill="#1da15b" />
      <circle cx="42" cy="42" r="19" fill="#f4f4f4" />
      <circle cx="42" cy="42" r="15" fill="#4f8af0" />
    </>
  ) },
  { key: 'acrobat', on: true, art: (
    <>
      <rect x="2" y="2" width="80" height="80" fill="#e8281e" />
      <rect x="6" y="6" width="72" height="72" fill="#34060c" />
      <path d="M40 14c-4 0-2 14 4 28 6 12 16 22 24 20 4-2-4-8-18-6-12 2-26 14-26 20 2 4 10-6 16-24 4-14 4-38 0-38z" fill="none" stroke="#f4f4f4" strokeWidth="2.500" />
    </>
  ) },
  { key: 'terminal', on: true, art: (
    <>
      <rect x="4" y="4" width="76" height="76" rx="3" fill="#1e1e1e" stroke="#666" strokeWidth="1" />
      <text x="10" y="42" fontFamily="Liberation Mono, monospace" fontWeight="700" fontSize="28" fill="#2dd53d">$</text>
      <rect x="27" y="20" width="13" height="26" fill="#19a52a" />
    </>
  ) },
  { key: 'canary', on: true, art: (
    <>
      <circle cx="42" cy="42" r="40" fill="#f8cc5c" />
      <path d="M42 2a40 40 0 0 0-34 19l17 29-1-8a18 18 0 0 1 18-18h35A40 40 0 0 0 42 2z" fill="#f09c24" />
      <path d="M8 21a40 40 0 0 0 26 60l17-30-9 9a18 18 0 0 1-17-10z" fill="#f4b626" />
      <circle cx="42" cy="42" r="19" fill="#f9f3dc" />
      <circle cx="42" cy="42" r="14" fill="#f6c23e" />
    </>
  ) },
  { key: 'elephant', on: true, art: (
    <>
      <path d="M14 34C12 12 28 0 48 0c20 0 34 16 34 38 0 14-2 26-6 36l-8 2-4-10-8 2-2 12-16 2-4-14z" fill="#1f86c8" />
      <path d="M28 12c12-8 32-6 44 12M22 26c10-6 20-8 30-6M60 22c10 4 14 16 12 30M56 10c6 2 10 6 12 10" fill="none" stroke="#62c4e8" strokeWidth="2.500" />
      <path d="M10 38c4-10 14-16 24-12 6 2 8 12 6 22-2 8-8 12-14 14v10c0 6 0 10-8 10-6 0-10-6-10-8 4 2 8 0 8-6V56C8 52 8 44 10 38z" fill="#156cb0" />
      <ellipse cx="46" cy="40" rx="15" ry="21" fill="#1978bc" stroke="#0f5c9c" strokeWidth="1.500" transform="rotate(10 46 40)" />
      <circle cx="22" cy="46" r="2" fill="#0c3a68" />
    </>
  ) },
  { key: 'atom', on: true, art: (
    <>
      <Fade id="atomGreen" from="#b0dfa0" to="#1fa878" />
      <circle cx="42" cy="42" r="39" fill="#eef2ee" />
      <circle cx="42" cy="42" r="35" fill="url(#atomGreen)" />
      <g fill="none" stroke="#f0faf4" strokeWidth="2.200">
        <ellipse cx="42" cy="42" rx="26" ry="10" transform="rotate(30 42 42)" />
        <ellipse cx="42" cy="42" rx="26" ry="10" transform="rotate(90 42 42)" />
        <ellipse cx="42" cy="42" rx="26" ry="10" transform="rotate(150 42 42)" />
      </g>
      <circle cx="42" cy="42" r="4" fill="#f0faf4" />
    </>
  ) },
];

const dockStack = [
  { key: 'folder', art: (
    <>
      <rect x="6" y="8" width="72" height="74" fill="#f0f0f0" stroke="#fafafa" />
      <path d="M10 8V2h64v6z" fill="#444" stroke="#fff" strokeWidth="2" />
      <path d="M12 70V26c8-6 20-8 28-10v54c-8 0-20 0-28 4z" fill="#e2e2e2" />
      <path d="M40 16l28 4v50H40z" fill="#d4d4d4" />
    </>
  ) },
  { key: 'preview', art: (
    <>
      <rect x="1" y="14" width="82" height="58" fill="#fafafa" />
      <rect x="4" y="22" width="24" height="3" fill="#777" />
      <rect x="4" y="40" width="18" height="2" fill="#bbb" />
      <path d="M66 18c6 0 10 4 10 10v6h-4v-3h-8v3h-3v-6c-2 0-2-8 5-10z" fill="#1f82c4" />
      <path d="M54 60c0-8 6-12 14-12s14 6 14 16c0 8-2 14-4 18h-6v-6h-6v8h-7v-10c-4 0-5-10-5-14z" fill="#1a7cc4" />
    </>
  ) },
  { key: 'trash', art: (
    <>
      <Fade id="binGlass" from="#eceef0" to="#c8ccd0" />
      <path d="M12 14h60l-6 62c-1 5-12 6-24 6s-22-1-24-6z" fill="url(#binGlass)" />
      <ellipse cx="42" cy="14" rx="30" ry="8" fill="#a6a8aa" />
      <path d="M20 14l8-12 8 14zM44 14l8-12 10 14z" fill="#f5f5f5" />
      <path d="M36 12l6-6 6 8z" fill="#6a9a8a" />
      <path d="M52 14l6-6 4 8z" fill="#444" />
    </>
  ) },
];

const downloads = [
  { name: 'Untitled.jpg', kind: 'img' },
  { name: 'Untitled (1).png', kind: 'img' },
  { name: 'pixel77_free_vector_bla....zip', kind: 'zip' },
  { name: 'Untitled.png', kind: 'img' },
  { name: 'XANDRIA - Nightfall (....mp3', kind: 'mp3' },
  { name: 'Nox Arcana - Night of....mp3', kind: 'mp3' },
];

const transactions = [
  { id: 1, date: '5/31/2017', amount: '100.0', text: 'Groceries', place: 'Trader Joes', sub: 'Food-groceries', fixed: true },
  { id: 2, date: '6/1/2017', amount: '15.0', text: 'Lunch', place: 'WholeFoods Market', sub: 'Food-lunches' },
  { id: 3, date: '6/1/2017', amount: '10.0', text: 'This was just bread and milk', place: 'Corner Store', sub: 'Food-groceries' },
];

const columns = [64, 164, 128, 296, 230, 192, 94, 152];
const heads = ['#Id', 'Date', 'Amount', 'Desciption', 'Location', 'Subcategory', 'Fixed', 'Recurring'];

const App = () => (
  <Screen>
    <Global />
    <MenuBar>
      <FaApple size={32} color="#111" />
      <MenuLink $ml={38} $bold>Chrome</MenuLink>
      <MenuLink $ml={38}>File</MenuLink>
      <MenuLink $ml={38}>Edit</MenuLink>
      <MenuLink $ml={38}>View</MenuLink>
      <MenuLink $ml={38}>History</MenuLink>
      <MenuLink $ml={37}>Bookmarks</MenuLink>
      <MenuLink $ml={37}>People</MenuLink>
      <MenuLink $ml={37}>Window</MenuLink>
      <MenuLink $ml={37}>Help</MenuLink>
      <Spacer />
      <MenuIcon $ml={0}><Elephant /></MenuIcon>
      <MenuIcon $ml={17}><Wifi /></MenuIcon>
      <MenuIcon $ml={24}><AirPlayMark /></MenuIcon>
      <MenuIcon $ml={24}><Speaker /></MenuIcon>
      <MenuLink $ml={27} $size={25}>100%</MenuLink>
      <MenuIcon $ml={11}><Battery /></MenuIcon>
      <MenuLink $ml={33}>Fri 12:40 AM</MenuLink>
      <MenuLink $ml={27}>Branka</MenuLink>
      <MenuIcon $ml={30}><Search size={32} color="#1a1a1a" /></MenuIcon>
      <MenuIcon $ml={30}><List size={36} color="#1a1a1a" strokeWidth={3} /></MenuIcon>
    </MenuBar>

    <BackWindow>
      <TopRow>
        <FrontWindow>
          <TabStrip>
            <Lights>
              <Light $color="#ff6259" />
              <Light $color="#ffbd2e" />
              <Light $color="#33c948" />
            </Lights>
            <Tab>
              <File size={30} color="#555" strokeWidth={2} />
              <TabTitle>Budget</TabTitle>
              <TabClose><X size={20} color="#555" strokeWidth={2.500} /></TabClose>
            </Tab>
            <NewTab />
            <ProfileSpot><Profile /></ProfileSpot>
          </TabStrip>
          <Toolbar>
            <NavIcon $mr={24}><ArrowLeft size={32} strokeWidth={2.500} /></NavIcon>
            <NavIcon $mr={24} $color="#d8d8d8"><ArrowRight size={32} strokeWidth={2.500} /></NavIcon>
            <NavIcon $mr={21}><RotateCw size={32} strokeWidth={2.500} /></NavIcon>
            <Omnibox>
              <Info size={26} color="#555" strokeWidth={2.500} />
              <Url>localhost<UrlRest>:3000/#</UrlRest></Url>
              <Star size={30} color="#6e6e6e" strokeWidth={2.500} />
            </Omnibox>
            <Extension>
              <svg width="33" height="32" viewBox="0 0 33 32" fill="none" stroke="#fff" strokeWidth="1.500">
                <ellipse cx="16" cy="16" rx="5" ry="13" />
                <ellipse cx="16" cy="16" rx="13" ry="5" />
                <path d="M20 14l-4 14M14 18l8 6" stroke="#222" strokeWidth="2.500" />
              </svg>
            </Extension>
            <Kebab><span /><span /><span /></Kebab>
          </Toolbar>
          <Content>
            <WelcomeRow>
              Welcome
              <BlueLink>Guest Guest LogOut</BlueLink>
            </WelcomeRow>
            <Tabs>
              <TabLink $active>TRANSACTIONS<TabIndicator /></TabLink>
              <TabLink>LOCATIONS</TabLink>
              <TabLink>CATEGORIES</TabLink>
              <TabLink>SUBCATEGORIES</TabLink>
            </Tabs>
            <Main>
              <Table>
                <colgroup>
                  {columns.map((w, i) => <col key={i} width={w} />)}
                </colgroup>
                <thead>
                  <tr>
                    {heads.map(h => <Th key={h}>{h}</Th>)}
                  </tr>
                </thead>
                <tbody>
                  {transactions.map((t, i) => (
                    <Row key={t.id} $odd={i % 2 === 0}>
                      <Td>{t.id}</Td>
                      <Td>{t.date}</Td>
                      <Td>{t.amount}</Td>
                      <Td>{t.text}</Td>
                      <Td>{t.place}</Td>
                      <Td>{t.sub}</Td>
                      <Td>
                        {t.fixed && (
                          <FixedMark width="38" height="30" viewBox="0 0 38 30" fill="none" stroke="#111" strokeWidth="3">
                            <path d="M2 15l11 11L36 2" />
                          </FixedMark>
                        )}
                      </Td>
                      <Td />
                    </Row>
                  ))}
                </tbody>
              </Table>
              <RightCol>
                <ButtonRow>
                  <RaisedButton $color="#9e9e9e">SELECT LOCATION</RaisedButton>
                  <RaisedButton $color="#9e9e9e">SELECT SUBCATEGORY</RaisedButton>
                </ButtonRow>
                <Card>
                  <CardTitle>Transaction</CardTitle>
                  <Form>
                    <InputRow>
                      <Field $w={260} $mr={46}><TextInput $w={158} placeholder="mm/dd/yyyy" /></Field>
                      <Field $w={260} $mr={64}><TextInput placeholder="Amount" /></Field>
                      <CheckItem $mr={64}>
                        <svg width="46" height="36" viewBox="0 0 46 36" fill="none" stroke="#26a69a" strokeWidth="3.500">
                          <path d="M2 18l15 16L44 2" />
                        </svg>
                        <CheckLabel $ml={28}>Fixed</CheckLabel>
                      </CheckItem>
                      <CheckItem>
                        <BoxMark />
                        <CheckLabel $ml={34}>Recurring</CheckLabel>
                      </CheckItem>
                    </InputRow>
                    <DescField>Description:</DescField>
                    <SelectRow>
                      <SelectField>Select location</SelectField>
                      <SelectField>Select subcategory</SelectField>
                    </SelectRow>
                    <SubmitRow>
                      <RaisedButton $color="#26a69a" $spacing={1}>SUBMIT</RaisedButton>
                    </SubmitRow>
                  </Form>
                </Card>
              </RightCol>
            </Main>
            <Footer>
              Home Budget Demo © 2017 BK
              <FooterLink>Link</FooterLink>
            </Footer>
          </Content>
          <GreenEdge />
        </FrontWindow>
        <SideStrip>
          <SideTabs><Profile /></SideTabs>
          <SideTools>
            <UploadBadge><ArrowUp size={22} strokeWidth={4} /></UploadBadge>
          </SideTools>
          <SideBody>
            <SideRail><SideBlue /></SideRail>
            <SideTrack><SideThumb /></SideTrack>
          </SideBody>
        </SideStrip>
      </TopRow>
      <ArticlePeek>
        <ArticleText>
          If you're <ArticleLink>using two screens with your Mac</ArticleLink>, by the way, two images will appear – one
        </ArticleText>
        <ArticleImage />
      </ArticlePeek>
      <DownloadBar>
        {downloads.map(d => (
          <DownloadItem key={d.name}>
            <DocIcon kind={d.kind} />
            <DownloadName>{d.name}</DownloadName>
            <DownloadCaret />
          </DownloadItem>
        ))}
        <ShowAll>
          <svg width="28" height="34" viewBox="0 0 28 34" style={{ flex: 'none' }}>
            <path d="M10 0h8v14h7L14 26 3 14h7z" fill="#555" />
            <rect y="30" width="28" height="4" fill="#555" />
          </svg>
          Show All
        </ShowAll>
        <BarClose><X size={22} strokeWidth={2} /></BarClose>
      </DownloadBar>
    </BackWindow>

    <Desktop>
      <BehindEdge />
      <Dock>
        {dockIcons.map(i => (
          <DockSlot key={i.key}>
            <Glyph>{i.art}</Glyph>
            <DockDot $on={i.on} />
          </DockSlot>
        ))}
        <DockDivider />
        {dockStack.map(i => (
          <DockSlot key={i.key}>
            <Glyph>{i.art}</Glyph>
            <DockDot />
          </DockSlot>
        ))}
      </Dock>
    </Desktop>
  </Screen>
);

export default App;
